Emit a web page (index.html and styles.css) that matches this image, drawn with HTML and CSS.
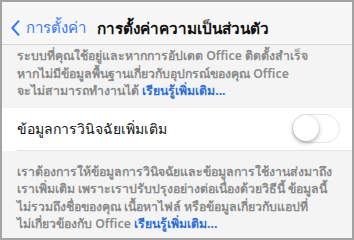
FILE: index.html
```html
<!DOCTYPE html>
<html lang="th">
<head>
    <meta charset="UTF-8">
    <meta name="viewport" content="width=device-width, initial-scale=1.0">
    <title>การตั้งค่าความเป็นส่วนตัว</title>
    <link rel="stylesheet" href="styles.css">
</head>
<body>
    <div class="screen">
        <div class="navbar">
            <a class="back" href="#">
                <svg class="chevron" width="9" height="16" viewBox="0 0 9 16">
                    <path d="M7.5 1.2 L1.4 8 L7.5 14.8" fill="none" stroke="#3478f6" stroke-width="2" stroke-linecap="round" stroke-linejoin="round"/>
                </svg>
                <span>การตั้งค่า</span>
            </a>
            <h1>การตั้งค่าความเป็นส่วนตัว</h1>
        </div>

        <p class="note first">
            <span class="line">ระบบที่คุณใช้อยู่และหากการอัปเดต Office ติดตั้งสำเร็จ</span>
            <span class="line">หากไม่มีข้อมูลพื้นฐานเกี่ยวกับอุปกรณ์ของคุณ Office</span>
            <span class="line">จะไม่สามารถทำงานได้ <a href="#">เรียนรู้เพิ่มเติม...</a></span>
        </p>

        <div class="group">
            <div class="row">
                <span class="label">ข้อมูลการวินิจฉัยเพิ่มเติม</span>
                <span class="switch"><span class="knob"></span></span>
            </div>
        </div>

        <p class="note second">
            <span class="line">เราต้องการให้ข้อมูลการวินิจฉัยและข้อมูลการใช้งานส่งมาถึง</span>
            <span class="line">เราเพิ่มเติม เพราะเราปรับปรุงอย่างต่อเนื่องด้วยวิธีนี้ ข้อมูลนี้</span>
            <span class="line">ไม่รวมถึงชื่อของคุณ เนื้อหาไฟล์ หรือข้อมูลเกี่ยวกับแอปที่</span>
            <span class="line">ไม่เกี่ยวข้องกับ Office <a href="#">เรียนรู้เพิ่มเติม...</a></span>
        </p>
    </div>
</body>
</html>
```

FILE: styles.css
```css
html, body {
    margin: 0;
    padding: 0;
}
body {
    font-family: "Noto Sans", "DejaVu Sans", sans-serif;
    background-color: #ffffff;
}
.screen {
    width: 354px;
    height: 240px;
    box-sizing: border-box;
    border: 2px solid #a3a3a3;
    background-color: #f4f4f4;
    overflow: hidden;
}
.navbar {
    height: 43px;
    box-sizing: border-box;
    padding-top: 10px;
    display: flex;
    align-items: center;
    border-bottom: 1px solid #d6d6d6;
    background-color: #f7f7f7;
}
.back {
    display: flex;
    align-items: center;
    gap: 6px;
    padding-left: 9px;
    color: #3478f6;
    text-decoration: none;
    font-size: 15px;
}
.navbar h1 {
    margin: 0 0 0 11px;
    font-size: 15.3px;
    font-weight: bold;
    color: #111;
}
.note {
    margin: 0;
    padding: 0 10px 0 15px;
    font-size: 12.3px;
    line-height: 17.5px;
    font-weight: 600;
    color: #8c8c8c;
}
.line {
    display: block;
    white-space: nowrap;
}
.note a {
    color: #2f6fd8;
    text-decoration: none;
    font-weight: bold;
}
.note.first {
    padding-top: 2px;
    padding-bottom: 8px;
}
.note.second {
    padding-top: 12px;
}
.group {
    background-color: #ffffff;
}
.row {
    height: 42px;
    margin-left: 15px;
    padding-right: 12px;
    display: flex;
    align-items: center;
    justify-content: space-between;
    border-bottom: 1px solid #e2e2e2;
}
.label {
    font-size: 14px;
    color: #111;
}
.switch {
    width: 48px;
    height: 29px;
    box-sizing: border-box;
    border: 1.5px solid #e4e4e4;
    border-radius: 15px;
    background-color: #ffffff;
    position: relative;
}
.knob {
    position: absolute;
    left: 0;
    top: 0;
    width: 26px;
    height: 26px;
    border-radius: 50%;
    background-color: #ffffff;
    box-shadow: 0 2px 4px rgba(0, 0, 0, 0.3), 0 0 1px rgba(0, 0, 0, 0.2);
}
```
